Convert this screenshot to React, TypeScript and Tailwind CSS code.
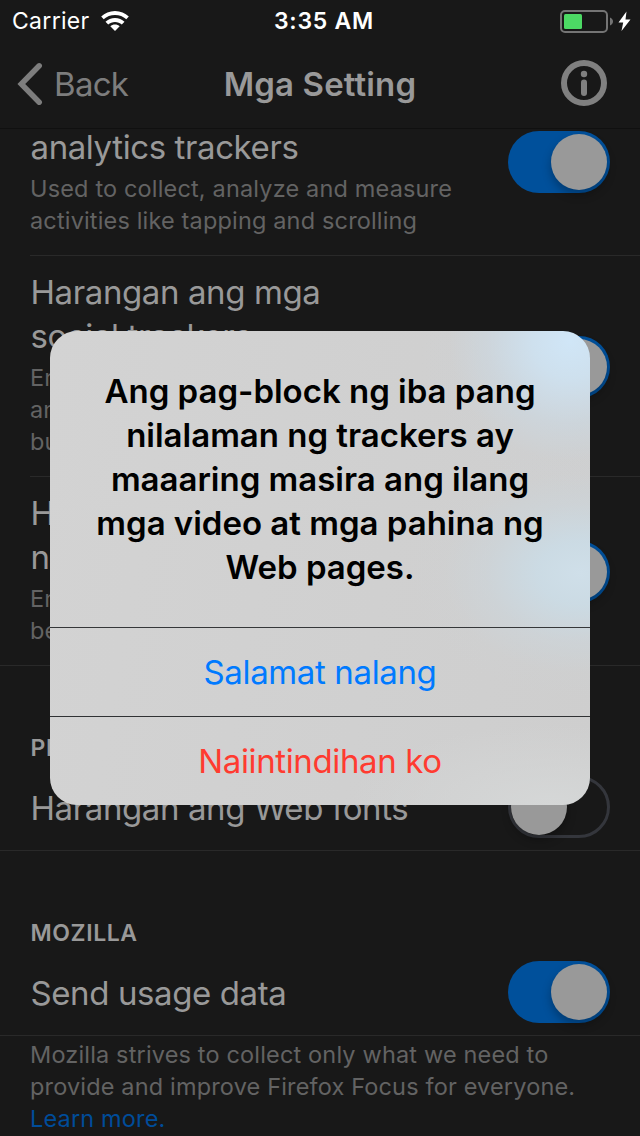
import type { ReactNode } from "react";

function Toggle({ on = false }: { on?: boolean }) {
  return (
    <div
      className={
        on
          ? "flex h-[62px] w-[102px] shrink-0 items-center justify-end rounded-full bg-[#00509b] p-[3px]"
          : "flex h-[62px] w-[102px] shrink-0 items-center justify-start rounded-full border-[3px] border-[#34363c]"
      }
    >
      <div className="h-14 w-14 rounded-full bg-[#999999] shadow-[0_5px_10px_rgba(0,0,0,0.28)]" />
    </div>
  );
}

function Title({ children }: { children: ReactNode }) {
  return (
    <div className="whitespace-pre pl-[0.5px] text-[33px] leading-[44px] tracking-[-0.4px] text-[#999999]">
      {children}
    </div>
  );
}

function Note({ children }: { children: ReactNode }) {
  return (
    <div className="whitespace-pre text-[23.5px] leading-8 tracking-[0.16px] text-[#636363]">
      {children}
    </div>
  );
}

function SectionHeader({ children }: { children: ReactNode }) {
  return (
    <div className="pl-[0.5px] text-[23px] font-[580] leading-8 tracking-[0.6px] text-[#999999]">
      {children}
    </div>
  );
}

function StatusBar() {
  return (
    <div className="grid h-10 grid-cols-3 items-center pl-3 pr-[9px] text-white">
      <div className="flex items-center gap-[11px]">
        <span className="pt-px text-[23px] leading-10 tracking-[0.3px]">Carrier</span>
        <svg className="h-5 w-7" viewBox="0 0 28 20" fill="currentColor">
          <path d="M14 0C8.6 0 3.800 2.100.2 5.500l2.500 2.700C5.700 5.500 9.700 4 14 4s8.300 1.500 11.300 4.200l2.500-2.700C24.200 2.100 19.400 0 14 0Z" />
          <path d="M14 7c-3.700 0-7 1.400-9.500 3.700l2.700 2.800c1.800-1.600 4.200-2.500 6.800-2.500s5 .9 6.800 2.500l2.700-2.800C21 8.400 17.700 7 14 7Z" />
          <path d="M14 13.600c-1.800 0-3.400.6-4.700 1.700L14 20l4.700-4.700c-1.300-1.100-2.900-1.700-4.700-1.700Z" />
        </svg>
      </div>
      <span className="pl-[5px] pt-px text-center text-[23px] font-[580] leading-10 tracking-[0.75px]">
        3:35 AM
      </span>
      <svg className="h-6 w-[71px] justify-self-end" viewBox="0 0 71 24">
        <rect x="1" y="2" width="46" height="21" rx="4" fill="none" stroke="#747474" strokeWidth="2" />
        <rect x="4" y="5" width="18" height="15" rx="1.500" fill="#4cd964" />
        <path d="M50 8.500c2 .8 3 2.300 3 4s-1 3.200-3 4Z" fill="#747474" />
        <path d="M66.500 2.500 58.500 13.500h4.700L61.500 22 70.500 10.500h-5Z" fill="#ffffff" />
      </svg>
    </div>
  );
}

function NavBar() {
  return (
    <div className="grid h-[88px] grid-cols-[180px_1fr_180px] items-center pr-[33px] pl-[17px]">
      <div className="flex items-center">
        <svg className="h-11 w-[26px] text-[#7d7d7d]" viewBox="0 0 26 44" fill="none" stroke="currentColor" strokeWidth="5.500" strokeLinecap="round" strokeLinejoin="miter">
          <path d="M22.200 3.800 4.300 22l17.900 18.200" />
        </svg>
        <span className="ml-[11px] text-[33px] leading-[44px] tracking-[-0.7px] text-[#7d7d7d]">
          Back
        </span>
      </div>
      <h1 className="whitespace-nowrap pl-4 text-center text-[33px] font-[560] leading-[44px] tracking-[0.12px] text-[#999999]">
        Mga Setting
      </h1>
      <svg className="mb-[3px] h-[46px] w-[46px] justify-self-end text-[#808080]" viewBox="0 0 46 46">
        <circle cx="23" cy="23" r="20" fill="none" stroke="currentColor" strokeWidth="6" />
        <circle cx="23" cy="14" r="3.200" fill="currentColor" />
        <rect x="20" y="19.500" width="6" height="16.500" rx="3" fill="currentColor" />
      </svg>
    </div>
  );
}

function Alert() {
  return (
    <div className="absolute left-[50px] top-[331px] flex h-[474px] w-[540px] flex-col overflow-hidden rounded-[27px] bg-[#d0d0d0] bg-[radial-gradient(ellipse_150px_150px_at_520px_10px,#d0e6f7_0%,rgba(206,226,241,0.9)_25%,rgba(203,219,231,0.5)_55%,rgba(205,211,216,0.15)_80%,rgba(208,208,208,0)_100%),radial-gradient(ellipse_170px_125px_at_530px_242px,#cfdfe9_0%,rgba(203,220,230,0.9)_25%,rgba(204,215,222,0.5)_55%,rgba(206,211,214,0.15)_80%,rgba(208,208,208,0)_100%),radial-gradient(ellipse_200px_80px_at_500px_474px,#d5d7d7_0%,rgba(208,208,208,0)_100%),linear-gradient(100deg,#d3d3d3,#cecece)] text-center">
      <h2 className="h-[296px] whitespace-pre pt-[38px] text-[33px] font-[560] leading-[44px] tracking-[-0.01px] text-black">
        {"Ang pag-block ng iba pang\nnilalaman ng trackers ay\nmaaaring masira ang ilang\nmga video at mga pahina ng\nWeb pages."}
      </h2>
      <button className="h-[89px] border-t border-[#353739] text-[33px] leading-[88px] tracking-[-0.37px] text-[#007aff]">
        Salamat nalang
      </button>
      <button className="h-[89px] border-t border-[#303234] text-[33px] leading-[88px] tracking-[-0.37px] text-[#ff3b30]">
        Naiintindihan ko
      </button>
    </div>
  );
}

export default function App() {
  return (
    <div className="relative h-[1136px] w-[640px] overflow-hidden bg-[#181818] font-['Inter',sans-serif]">
      <StatusBar />
      <NavBar />
      <div className="h-[1008px] overflow-hidden border-t border-[#101010]">
        <section className="-mt-1 pl-[30px]">
          <div className="flex h-[131px] items-start justify-between border-b border-[#292929] pr-[30px]">
            <div>
              <Title>analytics trackers</Title>
              <div className="mt-1">
                <Note>{"Used to collect, analyze and measure\nactivities like tapping and scrolling"}</Note>
              </div>
            </div>
            <div className="pt-1.5">
              <Toggle on />
            </div>
          </div>
          <div className="flex h-[221px] items-start justify-between border-b border-[#292929] pr-[30px] pt-3.5">
            <div>
              <Title>{"Harangan ang mga\nsocial trackers"}</Title>
              <div className="mt-1">
                <Note>{"Embedded on sites to track visits\nand to display content like share\nbuttons"}</Note>
              </div>
            </div>
            <div className="pt-[66px]">
              <Toggle on />
            </div>
          </div>
          <div className="flex h-[188px] items-start justify-between pr-[30px] pt-3.5">
            <div>
              <Title>{"Harangan ang iba pang\nnilalaman ng trackers"}</Title>
              <div className="mt-1">
                <Note>{"Enabling this may cause pages to\nbehave unexpectedly"}</Note>
              </div>
            </div>
            <div className="pt-[50px]">
              <Toggle on />
            </div>
          </div>
        </section>
        <section className="h-[186px] border-y border-[#292929] pl-[30px] pr-[30px] pt-[66px]">
          <SectionHeader>PERFORMANCE</SectionHeader>
          <div className="mt-3 flex h-[62px] items-center justify-between">
            <div className="pt-0.5">
              <Title>Harangan ang Web fonts</Title>
            </div>
            <Toggle />
          </div>
        </section>
        <section className="h-[185px] border-b border-[#292929] px-[30px] pt-[66px]">
          <SectionHeader>MOZILLA</SectionHeader>
          <div className="mt-3 flex h-[62px] items-center justify-between">
            <div className="pt-0.5">
              <Title>Send usage data</Title>
            </div>
            <Toggle on />
          </div>
        </section>
        <footer className="pl-[30px] pt-[3px]">
          <Note>
            {"Mozilla strives to collect only what we need to\nprovide and improve Firefox Focus for everyone.\n"}
            <a className="text-[#004c99]">Learn more.</a>
          </Note>
        </footer>
      </div>
      <Alert />
    </div>
  );
}
